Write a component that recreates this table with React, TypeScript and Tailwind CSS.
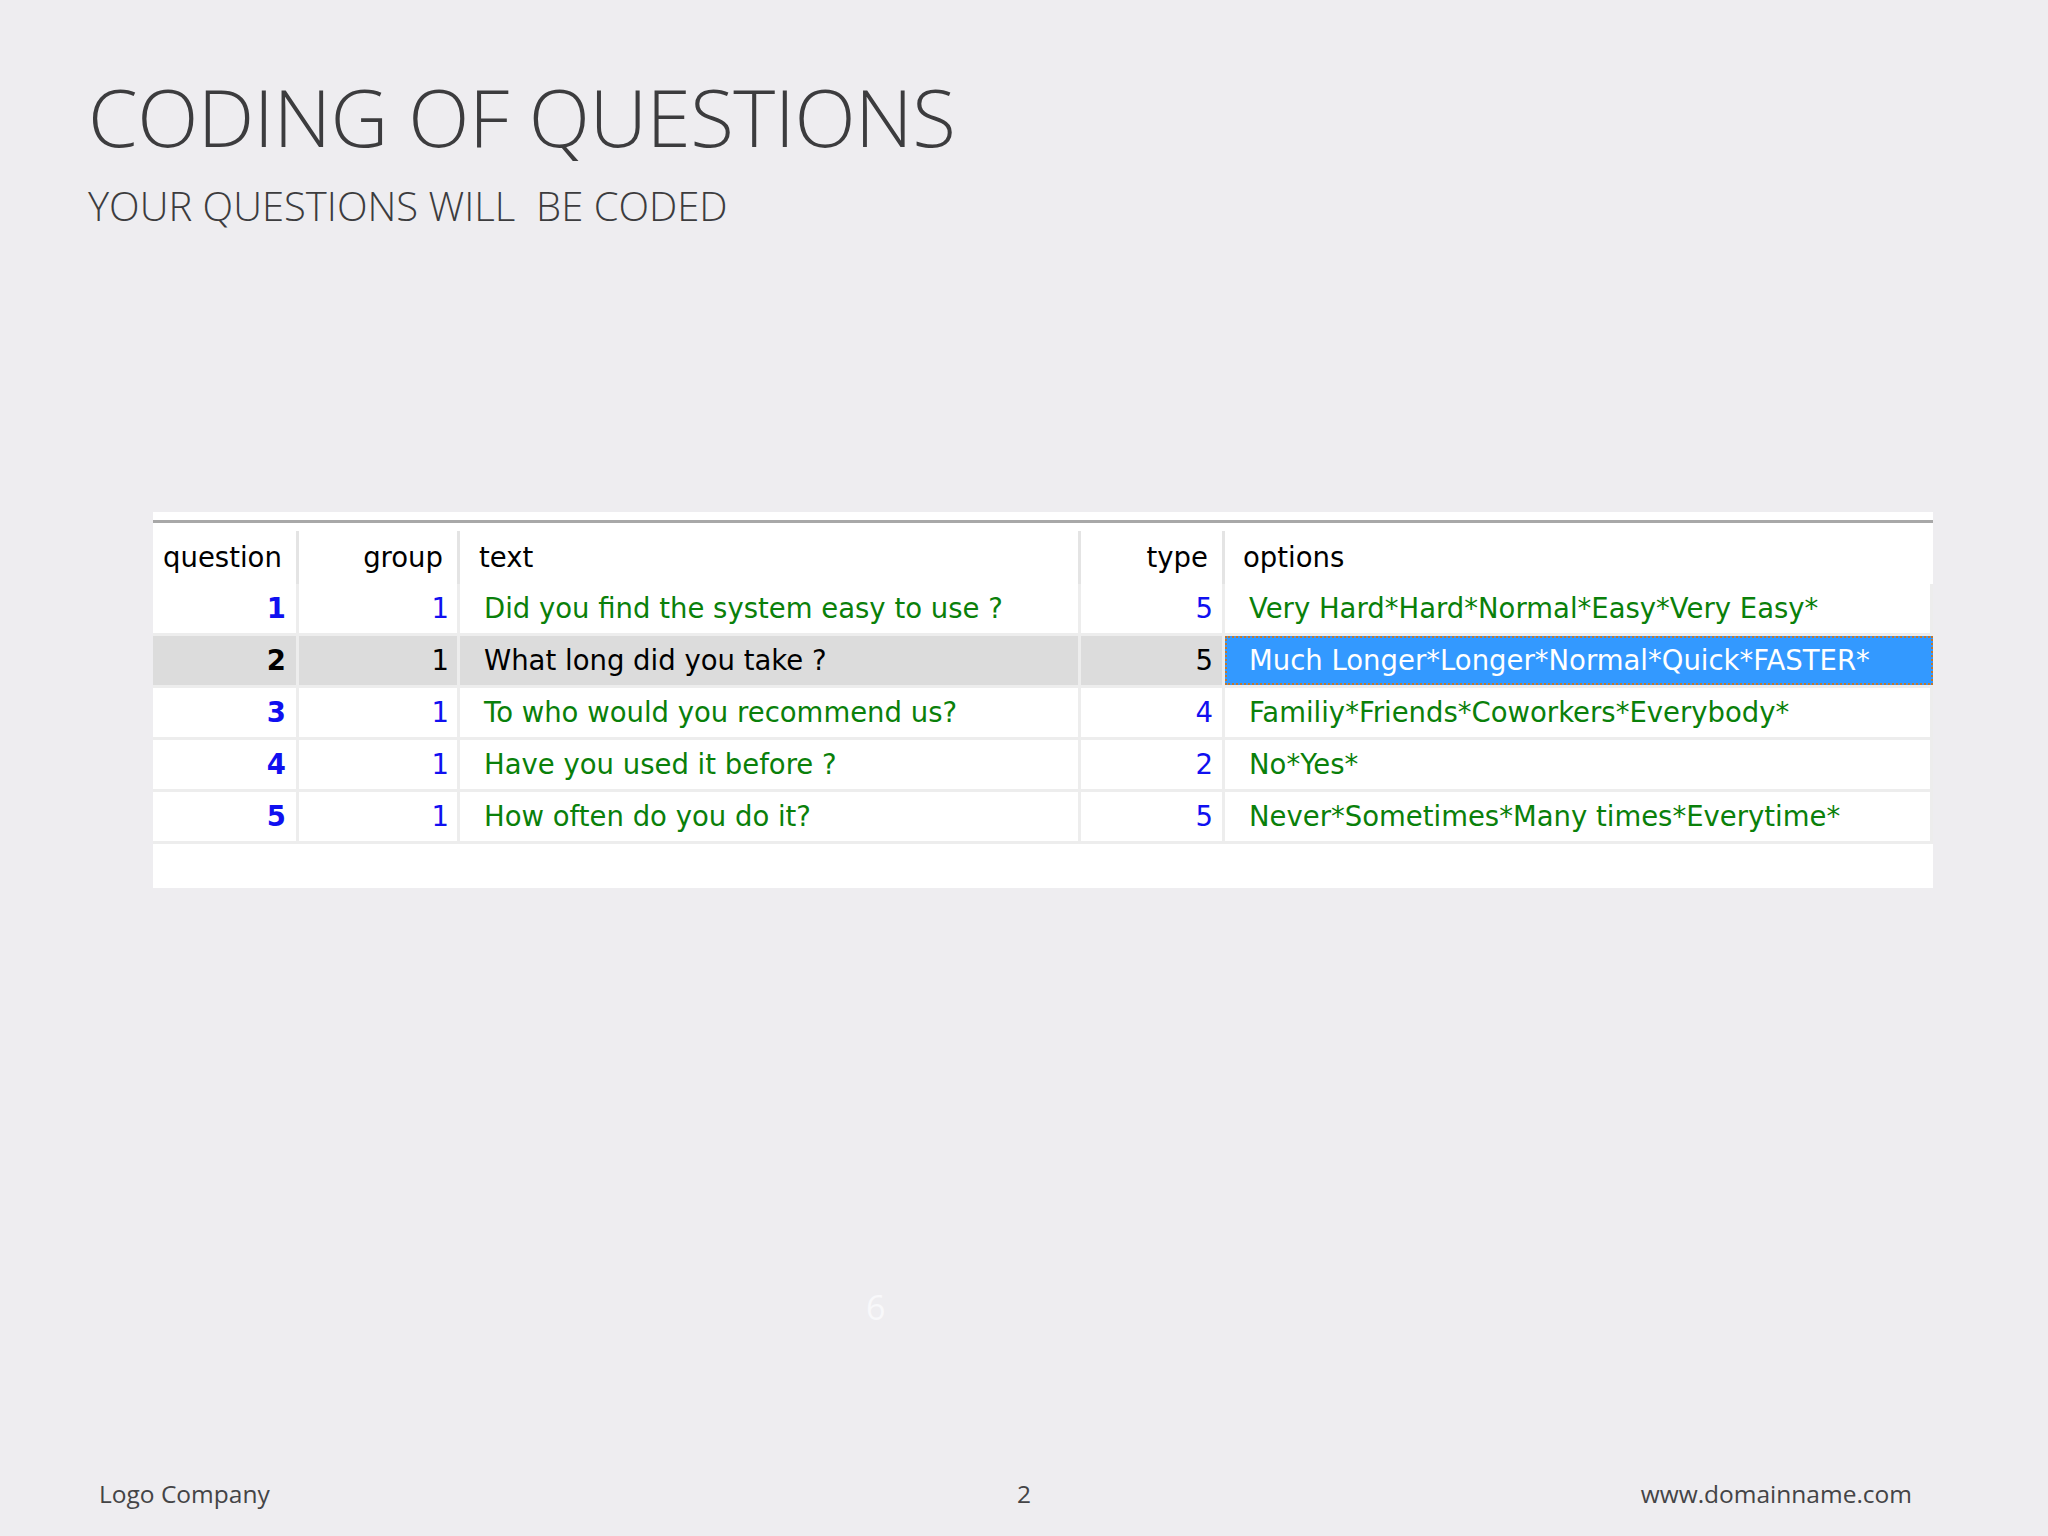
import React from "react";

type Row = {
  q: number;
  group: number;
  text: string;
  type: number;
  options: string;
  selected?: boolean;
};

const ROWS: Row[] = [
  { q: 1, group: 1, text: "Did you find the system easy to use ?", type: 5, options: "Very Hard*Hard*Normal*Easy*Very Easy*" },
  { q: 2, group: 1, text: "What long did you take ?", type: 5, options: "Much Longer*Longer*Normal*Quick*FASTER*", selected: true },
  { q: 3, group: 1, text: "To who would you recommend us?", type: 4, options: "Familiy*Friends*Coworkers*Everybody*" },
  { q: 4, group: 1, text: "Have you used it before ?", type: 2, options: "No*Yes*" },
  { q: 5, group: 1, text: "How often do you do it?", type: 5, options: "Never*Sometimes*Many times*Everytime*" },
];

const GRID = "grid grid-cols-[146px_161px_621px_144px_708px]";
const CELL = "flex items-center border-r-[3px] border-b-[3px] border-[#ededed] h-[52px] whitespace-nowrap";

function DataRow({ row }: { row: Row }) {
  const sel = row.selected;
  const bg = sel ? "bg-[#dcdcdc]" : "bg-white";
  return (
    <div className={GRID}>
      <div className={`${CELL} ${bg} justify-end pr-[10px] font-bold ${sel ? "text-black" : "text-[#1010f0]"}`}>
        {row.q}
      </div>
      <div className={`${CELL} ${bg} justify-end pr-[8px] ${sel ? "text-black" : "text-[#1010f0]"}`}>
        {row.group}
      </div>
      <div className={`${CELL} ${bg} pl-[24px] ${sel ? "text-black" : "text-[#0a800a]"}`}>
        {row.text}
      </div>
      <div className={`${CELL} ${bg} justify-end pr-[9px] ${sel ? "text-black" : "text-[#1010f0]"}`}>
        {row.type}
      </div>
      {sel ? (
        <div className="h-[52px] border-b-[3px] border-[#ededed] whitespace-nowrap">
          <div className="flex h-full items-center border-2 border-dotted border-[#c4782c] bg-[#3399ff] pl-[22px] text-white">
            {row.options}
          </div>
        </div>
      ) : (
        <div className={`${CELL} bg-white pl-[24px] text-[#0a800a]`}>{row.options}</div>
      )}
    </div>
  );
}

export default function App() {
  return (
    <div
      className="relative flex h-[1536px] w-[2048px] flex-col bg-[#eeedf0] text-[#404040]"
      style={{ fontFamily: '"Open Sans", "Liberation Sans", sans-serif' }}
    >
      <div className="pl-[88px] pt-[76px]">
        <h1 className="text-[80px] font-light leading-none tracking-[-0.5px] text-[#3c3c3e]">
          CODING OF QUESTIONS
        </h1>
        <p className="mt-[30px] whitespace-pre text-[40px] font-light leading-none text-[#3c3c3e]">
          YOUR QUESTIONS WILL  BE CODED
        </p>
      </div>

      <div className="ml-[153px] mt-[286px] w-[1780px] bg-white pt-[8px]">
        <div
          className="border-t-[3px] border-[#a8a8a8] text-[27.5px] text-black"
          style={{ fontFamily: '"DejaVu Sans", Tahoma, sans-serif' }}
        >
          <div className={`${GRID} h-[61px] pt-[8px]`}>
            <div className="flex items-center border-r-[3px] border-[#e4e4e4] pl-[10px]">question</div>
            <div className="flex items-center justify-end border-r-[3px] border-[#e4e4e4] pr-[14px]">group</div>
            <div className="flex items-center border-r-[3px] border-[#e4e4e4] pl-[19px]">text</div>
            <div className="flex items-center justify-end border-r-[3px] border-[#e4e4e4] pr-[14px]">type</div>
            <div className="flex items-center pl-[18px]">options</div>
          </div>
          {ROWS.map((r) => (
            <DataRow key={r.q} row={r} />
          ))}
          <div className="h-[44px]" />
        </div>
      </div>

      <div className="absolute left-[866px] top-[1282px] text-[34px] text-[#f8f8fa]">6</div>

      <div className="mt-auto grid grid-cols-[1fr_auto_1fr] items-center pb-[23px] text-[24.5px] text-[#444446]">
        <span className="pl-[99px]">Logo Company</span>
        <span>2</span>
        <span className="pr-[136px] text-right">www.domainname.com</span>
      </div>
    </div>
  );
}
